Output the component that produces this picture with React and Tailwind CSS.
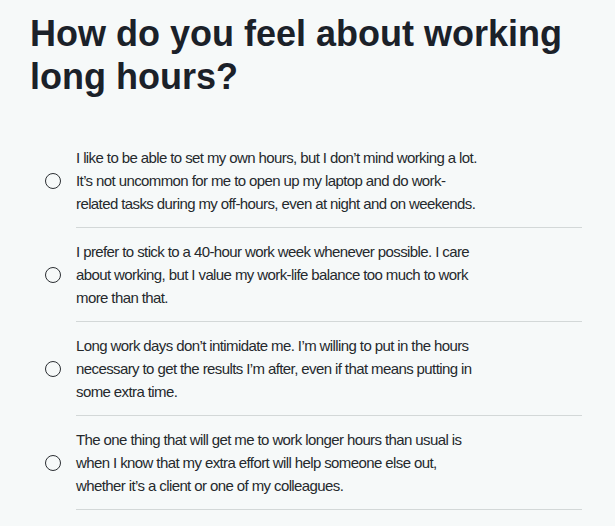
const options = [
  "I like to be able to set my own hours, but I don\u2019t mind working a lot. It\u2019s not uncommon for me to open up my laptop and do work-related tasks during my off-hours, even at night and on weekends.",
  "I prefer to stick to a 40-hour work week whenever possible. I care about working, but I value my work-life balance too much to work more than that.",
  "Long work days don\u2019t intimidate me. I\u2019m willing to put in the hours necessary to get the results I\u2019m after, even if that means putting in some extra time.",
  "The one thing that will get me to work longer hours than usual is when I know that my extra effort will help someone else out, whether it\u2019s a client or one of my colleagues.",
];

export default function App() {
  return (
    <div className="min-h-screen bg-[#f6f9f9] font-['Liberation_Sans',Arial,sans-serif] pl-[30px] pr-[33px] pt-[12px]">
      <h1 className="text-[36px] leading-[43px] font-bold text-[#1b2129]">
        How do you feel about working long hours?
      </h1>
      <div className="mt-[36px]">
        {options.map((text, i) => (
          <label key={i} className="flex items-center gap-[15px] cursor-pointer">
            <span className="w-4 h-4 rounded-full border-[1.5px] border-[#2b2f33] shrink-0 ml-[15px]" />
            <div className="flex-1 py-3 border-b border-[#d3d8d8]">
              <p className="max-w-[406px] text-[15px] leading-[23px] tracking-[-0.6px] text-[#25292d]">
                {text}
              </p>
            </div>
          </label>
        ))}
      </div>
    </div>
  );
}
